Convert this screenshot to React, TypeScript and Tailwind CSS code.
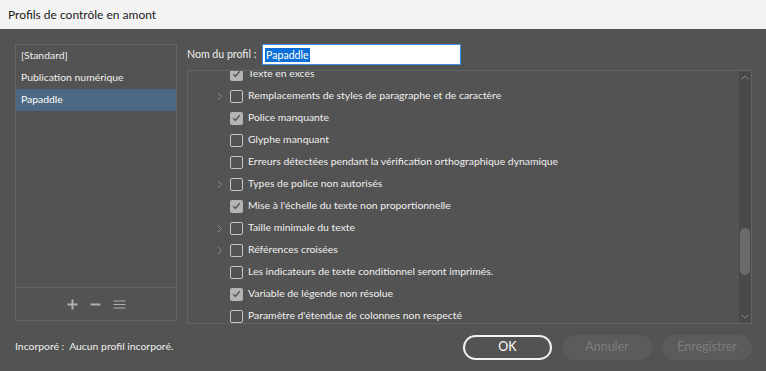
import React from "react";

const rows: { label: string; checked: boolean; chevron: boolean }[] = [
  { label: "Texte en excès", checked: true, chevron: false },
  { label: "Remplacements de styles de paragraphe et de caractère", checked: false, chevron: true },
  { label: "Police manquante", checked: true, chevron: false },
  { label: "Glyphe manquant", checked: false, chevron: false },
  { label: "Erreurs détectées pendant la vérification orthographique dynamique", checked: false, chevron: false },
  { label: "Types de police non autorisés", checked: false, chevron: true },
  { label: "Mise à l'échelle du texte non proportionnelle", checked: true, chevron: false },
  { label: "Taille minimale du texte", checked: false, chevron: true },
  { label: "Références croisées", checked: false, chevron: true },
  { label: "Les indicateurs de texte conditionnel seront imprimés.", checked: false, chevron: false },
  { label: "Variable de légende non résolue", checked: true, chevron: false },
  { label: "Paramètre d'étendue de colonnes non respecté", checked: false, chevron: false },
  { label: "Taille du texte", checked: false, chevron: false },
];

function Row({ label, checked, chevron }: { label: string; checked: boolean; chevron: boolean }) {
  return (
    <div className="flex h-[22px] items-center shrink-0">
      <div className="w-[42px] flex justify-end pr-[7px]">
        {chevron && (
          <svg width="6" height="9" viewBox="0 0 6 9">
            <path d="M1 1 L4.5 4.5 L1 8" stroke="#8a8a8a" strokeWidth="1" fill="none" />
          </svg>
        )}
      </div>
      {checked ? (
        <div className="w-[13px] h-[13px] rounded-[2px] bg-[#b4b4b4] flex items-center justify-center">
          <svg width="9" height="8" viewBox="0 0 9 8">
            <path d="M1.2 4.2 L3.4 6.3 L7.8 1.3" stroke="#5a5a5a" strokeWidth="1.5" fill="none" />
          </svg>
        </div>
      ) : (
        <div className="w-[13px] h-[13px] rounded-[2px] border border-[#c4c4c4]" />
      )}
      <span className="ml-[5px] text-[#f0f0f0] whitespace-nowrap">{label}</span>
    </div>
  );
}

export default function App() {
  return (
    <div
      className="w-[766px] h-[371px] flex flex-col bg-[#535353] text-[10.4px] overflow-hidden"
      style={{ fontFamily: 'Lato, "Noto Sans", sans-serif' }}
    >
      <div className="h-[29px] bg-[#f3f3f3] flex items-center pl-[8px] text-[12px] text-[#1a1a1a] shrink-0">
        Profils de contrôle en amont
      </div>
      <div className="flex flex-1 pt-[15px] pl-[15px] pr-[14px]">
        <div className="flex flex-col w-[162px] shrink-0">
          <div className="h-[277px] border border-[#646464] flex flex-col">
            <div className="flex-1 flex flex-col text-[#f0f0f0]">
              <div className="h-[22px] flex items-center pl-[5px]">[Standard]</div>
              <div className="h-[22px] flex items-center pl-[5px]">Publication numérique</div>
              <div className="h-[22px] flex items-center pl-[5px] bg-[#4c6882] text-white">Papaddle</div>
            </div>
            <div className="h-[33px] border-t border-[#646464] flex items-center justify-center gap-[12px]">
              <svg width="11" height="11" viewBox="0 0 11 11">
                <path d="M5.5 0.5 V10.5 M0.5 5.5 H10.5" stroke="#b0b0b0" strokeWidth="2" />
              </svg>
              <svg width="11" height="11" viewBox="0 0 11 11">
                <path d="M0.5 5.5 H10.5" stroke="#b0b0b0" strokeWidth="2" />
              </svg>
              <svg width="13" height="11" viewBox="0 0 13 11">
                <path d="M0.5 2 H12.5 M0.5 5.5 H12.5 M0.5 9 H12.5" stroke="#b0b0b0" strokeWidth="1" />
              </svg>
            </div>
          </div>
          <div className="mt-[18px] text-[#f0f0f0] whitespace-nowrap">Incorporé :&nbsp; Aucun profil incorporé.</div>
        </div>
        <div className="flex flex-col ml-[10px] flex-1 min-w-0">
          <div className="flex items-center h-[21px]">
            <span className="text-[#f0f0f0] whitespace-nowrap w-[75px] text-[10.6px]">Nom du profil :</span>
            <div className="w-[199px] h-[21px] bg-white border border-[#3d8fe6] flex items-center pl-[2px]">
              <span className="bg-[#0a6fd6] text-white leading-[14px] px-[1px] text-[10.6px]">Papaddle</span>
            </div>
          </div>
          <div className="mt-[5px] h-[254px] border border-[#646464] flex">
            <div className="flex-1 min-w-0 overflow-hidden">
              <div className="flex flex-col mt-[-8px]">
                {rows.map((r) => (
                  <Row key={r.label} {...r} />
                ))}
              </div>
            </div>
            <div className="w-[12px] shrink-0 bg-[#494949] flex flex-col items-center">
              <svg className="mt-[4px]" width="8" height="5" viewBox="0 0 8 5">
                <path d="M0.5 4.5 L4 1 L7.5 4.5" stroke="#8a8a8a" strokeWidth="1" fill="none" />
              </svg>
              <div className="mt-[148px] w-[10px] h-[47px] rounded-full bg-[#6b6b6b]" />
              <div className="flex-1" />
              <svg className="mb-[4px]" width="8" height="5" viewBox="0 0 8 5">
                <path d="M0.5 0.5 L4 4 L7.5 0.5" stroke="#8a8a8a" strokeWidth="1" fill="none" />
              </svg>
            </div>
          </div>
          <div className="flex justify-end gap-[10px] mt-[11px]">
            <div className="w-[89px] h-[25px] rounded-full border-2 border-[#f0f0f0] flex items-center justify-center text-white text-[12.5px]">
              OK
            </div>
            <div className="w-[90px] h-[25px] rounded-full bg-[#5b5b5b] flex items-center justify-center text-[#7d7d7d] text-[12.5px]">
              Annuler
            </div>
            <div className="w-[90px] h-[25px] rounded-full bg-[#5b5b5b] flex items-center justify-center text-[#7d7d7d] text-[12.5px]">
              Enregistrer
            </div>
          </div>
        </div>
      </div>
    </div>
  );
}
